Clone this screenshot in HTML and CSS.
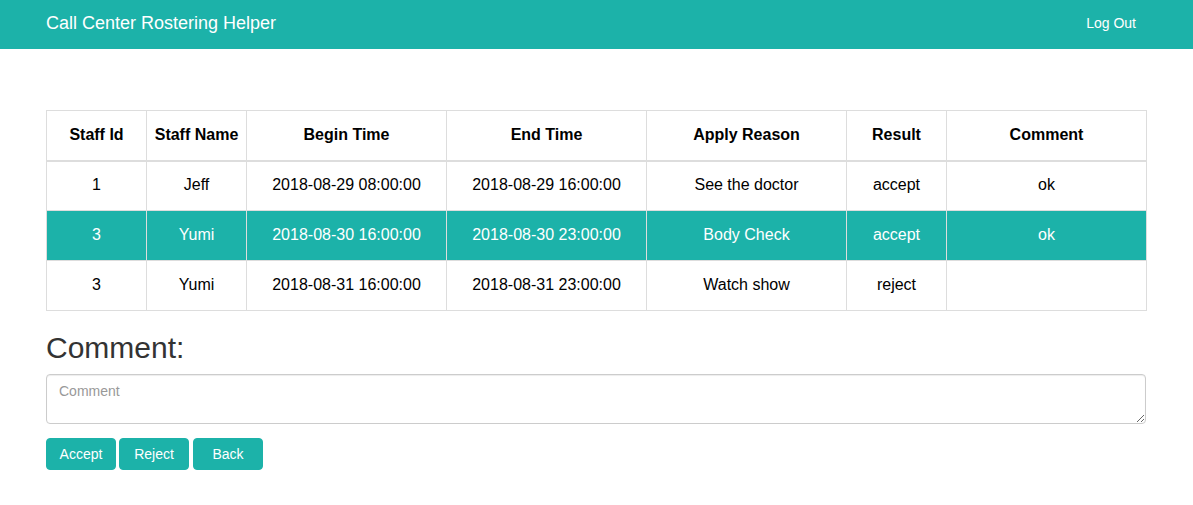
FILE: index.html
```html
<!DOCTYPE html>
<html>
<head>
<meta charset="utf-8">
<link rel="stylesheet" href="styles.css">
</head>
<body>
<nav class="navbar">
  <div class="brand">Call Center Rostering Helper</div>
  <a class="logout">Log Out</a>
</nav>
<main class="content">
  <table class="roster">
    <colgroup>
      <col class="w100"><col class="w100"><col class="w200"><col class="w200"><col class="w200"><col class="w100"><col class="w200">
    </colgroup>
    <thead>
      <tr><th>Staff Id</th><th>Staff Name</th><th>Begin Time</th><th>End Time</th><th>Apply Reason</th><th>Result</th><th>Comment</th></tr>
    </thead>
    <tbody>
      <tr><td>1</td><td>Jeff</td><td>2018-08-29 08:00:00</td><td>2018-08-29 16:00:00</td><td>See the doctor</td><td>accept</td><td>ok</td></tr>
      <tr class="selected"><td>3</td><td>Yumi</td><td>2018-08-30 16:00:00</td><td>2018-08-30 23:00:00</td><td>Body Check</td><td>accept</td><td>ok</td></tr>
      <tr><td>3</td><td>Yumi</td><td>2018-08-31 16:00:00</td><td>2018-08-31 23:00:00</td><td>Watch show</td><td>reject</td><td></td></tr>
    </tbody>
  </table>
  <h3 class="comment-title">Comment:</h3>
  <textarea class="comment-box" placeholder="Comment"></textarea>
  <div class="actions">
    <button class="btn">Accept</button>
    <button class="btn">Reject</button>
    <button class="btn btn-last">Back</button>
  </div>
</main>
</body>
</html>
```
FILE: styles.css
```css
* { box-sizing: border-box; }
body {
  margin: 0;
  font-family: "Liberation Sans", Arial, sans-serif;
  font-size: 14px;
  color: #333;
  background: #fff;
}
.navbar {
  height: 49px;
  background: #1cb2a9;
  display: flex;
  align-items: center;
  justify-content: space-between;
  padding: 0 57px 0 46px;
  color: #fff;
}
.brand { font-size: 18px; line-height: 20px; padding-bottom: 4px; }
.logout { font-size: 14px; color: #fff; padding-bottom: 3px; }
.content {
  width: 1100px;
  margin-left: 46px;
  padding-top: 61px;
}
.roster {
  width: 1100px;
  border-collapse: collapse;
  table-layout: fixed;
  font-size: 16px;
  color: #000;
}
.w100 { width: 100px; }
.w200 { width: 200px; }
.roster th, .roster td {
  border: 1px solid #ddd;
  text-align: center;
  height: 50px;
  padding: 0 0 2px;
  white-space: nowrap;
  vertical-align: middle;
}
.roster th { font-weight: bold; border-bottom: 2px solid #ddd; padding: 0; }
.roster tr.selected td { background: #1cb2a9; color: #fff; }
.comment-title {
  margin: 20px 0 10px;
  font-size: 30px;
  font-weight: normal;
  line-height: 33px;
  color: #333;
}
.comment-box {
  display: block;
  width: 1100px;
  height: 50px;
  border: 1px solid #ccc;
  border-radius: 4px;
  padding: 8px 12px;
  font-family: "Liberation Sans", Arial, sans-serif;
  font-size: 14px;
  box-shadow: inset 0 1px 1px rgba(0,0,0,.075);
  resize: vertical;
}
.comment-box::placeholder { color: #999; }
.actions {
  display: flex;
  gap: 3px;
  margin-top: 14px;
}
.btn {
  width: 70px;
  height: 32px;
  background: #1cb2a9;
  color: #fff;
  border: 1px solid #1cb2a9;
  border-radius: 4px;
  font-family: "Liberation Sans", Arial, sans-serif;
  font-size: 14px;
  padding: 0;
}
.btn-last { margin-left: 1px; }
```
